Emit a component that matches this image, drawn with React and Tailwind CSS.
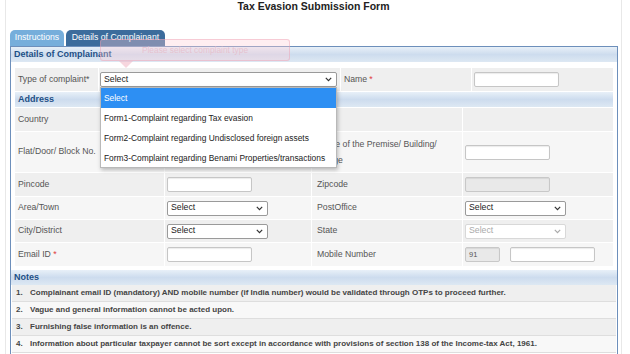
import React from "react";

const Chevron = ({ color = "#333" }) => (
  <svg width="7" height="5" viewBox="0 0 7 5" className="shrink-0">
    <path d="M0.8 0.8 L3.5 3.6 L6.2 0.8" fill="none" stroke={color} strokeWidth="1.2" />
  </svg>
);

const Input = ({ w = "w-[85px]", disabled = false, children }) => (
  <div
    className={`${w} h-[15px] rounded-[2px] border ${
      disabled ? "border-[#c8c8c8] bg-[#e9e9e9]" : "border-[#c6c6c6] bg-white"
    } shadow-[inset_0_1px_1px_rgba(0,0,0,0.08)] flex items-center px-[3px] text-[7.5px] text-[#555]`}
  >
    {children}
  </div>
);

const Select = ({ w = "w-[101px]", disabled = false }) => (
  <div
    className={`${w} h-[15px] rounded-[2px] border ${
      disabled ? "border-[#d8d8d8] text-[#aaa]" : "border-[#9a9a9a] text-[#222]"
    } bg-white flex items-center justify-between pl-[3px] pr-[4px] text-[8.7px]`}
  >
    <span>Select</span>
    <Chevron color={disabled ? "#aaa" : "#333"} />
  </div>
);

const Header = ({ children, className = "" }) => (
  <div
    className={`h-[15px] bg-gradient-to-b from-[#e8f0f8] via-[#cddcee] to-[#dde8f3] flex items-center pl-[3px] text-[9px] font-bold text-[#1d4f86] ${className}`}
  >
    {children}
  </div>
);

const Cell = ({ w, children, className = "" }) => (
  <div className={`${w} flex items-center ${className}`}>{children}</div>
);

const Row = ({ h = "h-[23px]", bg, cells }) => (
  <div className={`flex gap-[1px] ${h}`}>
    {cells.map((c, i) => (
      <div
        key={i}
        className={`${c.w} ${bg} flex items-center ${c.pl ?? "pl-[3px]"} text-[8.7px] text-[#555]`}
      >
        {c.content}
      </div>
    ))}
  </div>
);

const COLS = ["w-[149px]", "w-[146px]", "w-[150px]", "flex-1"];

const addr = (a, b, c, d) => [
  { w: COLS[0], content: a },
  { w: COLS[1], content: b, pl: "pl-[2px]" },
  { w: COLS[2], content: c, pl: "pl-[5px]" },
  { w: COLS[3], content: d, pl: "pl-[2px]" },
];

export default function App() {
  const notes = [
    "Complainant email ID (mandatory) AND mobile number (if India number) would be validated through OTPs to proceed further.",
    "Vague and general information cannot be acted upon.",
    "Furnishing false information is an offence.",
    "Information about particular taxpayer cannot be sort except in accordance with provisions of section 138 of the Income-tax Act, 1961.",
  ];
  return (
    <div
      className="w-[630px] h-[354px] overflow-hidden bg-white relative"
      style={{ fontFamily: '"Liberation Sans", Arial, sans-serif' }}
    >
      <div className="ml-[5px] w-[617px] h-[354px] border-x border-[#e8e8e8] pl-[4px]">
        <div className="h-[30px] text-center font-bold text-[10.5px] leading-[12px] text-[#222] pr-[4px]">
          Tax Evasion Submission Form
        </div>
        <div className="flex h-[16px] gap-[2px]">
          <div className="w-[54px] rounded-t-[5px] bg-[#76aedb] text-white text-[8.7px] flex items-center justify-center">
            Instructions
          </div>
          <div className="w-[99px] rounded-t-[5px] bg-[#3c6c9c] text-white text-[8.7px] flex items-center justify-center">
            Details of Complainant
          </div>
        </div>
        <div className="w-[608px] h-[330px] border border-[#6d8fbb]">
          <Header>Details of Complainant</Header>
          <div className="px-[4px] pt-[6px] pb-[4px] flex flex-col gap-[1px]">
            <div className="flex gap-[1px] h-[23px]">
              <Cell w="w-[83px]" className="bg-[#efefef] pl-[3px] text-[8.7px] text-[#555]">
                Type of complaint*
              </Cell>
              <Cell w="w-[241px]" className="bg-[#efefef] pl-[1px]">
                <Select w="w-[237px]" />
              </Cell>
              <Cell w="w-[130px]" className="bg-[#efefef] pl-[3px] text-[8.7px] text-[#555]">
                Name <span className="text-[#e04040] ml-[2px]">*</span>
              </Cell>
              <Cell w="flex-1" className="bg-[#efefef] pl-[2px]">
                <Input />
              </Cell>
            </div>
            <Header>Address</Header>
            <Row bg="bg-[#efefef]" cells={addr("Country", null, null, null)} />
            <Row
              h="h-[40px]"
              bg="bg-[#f6f6f6]"
              cells={addr(
                "Flat/Door/ Block No.",
                <Input />,
                <span className="leading-[16px]">
                  Name of the Premise/ Building/
                  <br />
                  Village
                </span>,
                <Input />
              )}
            />
            <Row
              bg="bg-[#efefef]"
              cells={addr("Pincode", <Input />, "Zipcode", <Input disabled />)}
            />
            <Row
              h="h-[22px]"
              bg="bg-[#f6f6f6]"
              cells={addr("Area/Town", <Select />, "PostOffice", <Select />)}
            />
            <Row
              h="h-[22px]"
              bg="bg-[#efefef]"
              cells={addr("City/District", <Select />, "State", <Select disabled />)}
            />
            <Row
              bg="bg-[#f6f6f6]"
              cells={addr(
                <span>
                  Email ID <span className="text-[#e04040]">*</span>
                </span>,
                <Input />,
                "Mobile Number",
                <div className="flex gap-[10px]">
                  <Input w="w-[35px]" disabled>
                    91
                  </Input>
                  <Input />
                </div>
              )}
            />
          </div>
          <Header>Notes</Header>
          <div className="px-[1px]">
            {notes.map((n, i) => (
              <div
                key={i}
                className={`h-[17px] flex items-center border-b border-[#dedede] ${
                  i % 2 === 0 ? "bg-[#efefef]" : "bg-[#f8f8f8]"
                } text-[8px] font-bold text-[#444]`}
              >
                <span className="w-[18px] pl-[4px]">{i + 1}.</span>
                <span>{n}</span>
              </div>
            ))}
          </div>
        </div>
      </div>

      {/* tooltip */}
      <div className="absolute left-[100px] top-[39px] w-[190px] h-[22px] rounded-[3px] border border-[rgba(235,150,170,0.4)] bg-[rgba(255,205,215,0.35)] flex items-center justify-center text-[8.4px] text-[rgba(230,185,198,0.75)]">
        Please select complaint type
      </div>
      <div className="absolute left-[119px] top-[61px] w-0 h-0 border-l-[7px] border-r-[7px] border-t-[7px] border-l-transparent border-r-transparent border-t-[rgba(240,180,195,0.55)]" />

      {/* dropdown */}
      <div className="absolute left-[100px] top-[87px] w-[237px] h-[81px] bg-white border border-[#b9b9b9] shadow-[1px_2px_4px_rgba(0,0,0,0.25)] text-[8.4px] text-[#222]">
        <div className="h-[20px] bg-[#2d8ff3] text-white flex items-center pl-[3px]">Select</div>
        <div className="h-[20px] flex items-center pl-[3px]">Form1-Complaint regarding Tax evasion</div>
        <div className="h-[20px] flex items-center pl-[3px]">Form2-Complaint regarding Undisclosed foreign assets</div>
        <div className="h-[20px] flex items-center pl-[3px]">Form3-Complaint regarding Benami Properties/transactions</div>
      </div>
    </div>
  );
}
